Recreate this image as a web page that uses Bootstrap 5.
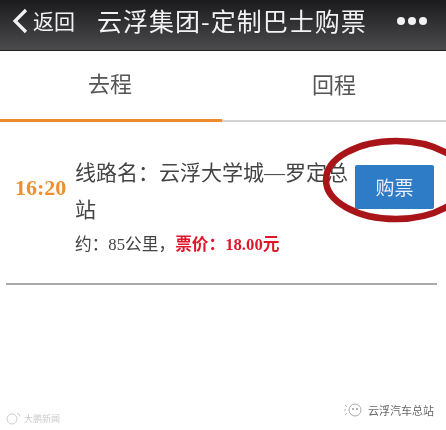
<!DOCTYPE html>
<html lang="zh">
<head>
<meta charset="utf-8">
<title>云浮集团-定制巴士购票</title>
<link rel="stylesheet" href="https://cdn.jsdelivr.net/npm/bootstrap@5.3.0/dist/css/bootstrap.min.css">
<style>
html,body{height:430px;overflow:hidden;background:#fff}
body{font-family:"Liberation Serif","Noto Sans CJK SC",serif;color:#444;position:relative}
.page{filter:blur(.45px);height:430px}
.hdr{height:51px;background:linear-gradient(#1b1b1d,#4b4b4d);color:#f2f2f2;font-family:"Noto Sans CJK SC",sans-serif;border-bottom:1px solid #222;padding:0 0 9px 12px}
.hdr-back{font-size:21px;line-height:1;gap:5px;width:85px;flex:none}
.hdr-title{font-size:25px;line-height:1;width:290px;flex:none;letter-spacing:1px;white-space:nowrap}
.hdr-dots{gap:3px;margin-left:10px}
.hdr-dots i{width:8px;height:8px;border-radius:50%;background:#f2f2f2;display:block}
.tabs{height:71px;font-family:"Noto Sans CJK SC",sans-serif;font-size:22px;color:#555}
.tab-a,.tab-b{height:100%;padding-bottom:5px;border-bottom:2px solid #d4d4d4}
.tab-a{width:222px;border-bottom:3px solid #ee8a2e;padding-right:2px}
.tab-b{width:224px}
.trip{padding:33px 3px 0 9px;height:163px;margin:0 9px 0 6px;border-bottom:2px solid #a9a9a9}
.trip-time{font-size:22px;font-weight:700;color:#ee8f30;width:60px;flex:none;margin-top:22px;line-height:1}
.trip-name{font-size:21px;line-height:36.5px;width:277px;color:#444;flex:none}
.trip-meta{font-size:16.7px;line-height:20px;margin-top:7px;color:#444}
.trip-price{color:#e0162b;font-weight:700}
.buy{background:#2e7cc6;border:0;border-radius:2px;width:79px;height:44px;color:#eef;font-size:19px;font-family:"Noto Sans CJK SC",sans-serif;padding:0;flex:none;margin:10px 0 0 3px}
.ring{position:absolute;left:322px;top:137px;pointer-events:none}
.mark-l,.mark-r{position:absolute;font-family:"Noto Sans CJK SC",sans-serif;line-height:1}
.mark-l{left:6px;top:412px;font-size:9px;color:#ccc;gap:2px}
.mark-r{left:343px;top:402px;font-size:11px;color:#666;gap:5px}
</style>
</head>
<body>
<div class="page">
<header class="hdr d-flex align-items-center">
  <div class="hdr-back d-flex align-items-center">
    <svg width="16" height="26" viewBox="0 0 16 26"><path d="M14 2 3 13l11 11" fill="none" stroke="#f2f2f2" stroke-width="3.2"/></svg>
    <span>返回</span>
  </div>
  <div class="hdr-title">云浮集团-定制巴士购票</div>
  <div class="hdr-dots d-flex"><i></i><i></i><i></i></div>
</header>
<nav class="tabs d-flex">
  <div class="tab-a d-flex align-items-center justify-content-center">去程</div>
  <div class="tab-b d-flex align-items-center justify-content-center">回程</div>
</nav>
<section class="trip d-flex align-items-start">
  <div class="trip-time">16:20</div>
  <div>
    <div class="trip-name">线路名：云浮大学城—罗定总站</div>
    <div class="trip-meta">约：85公里，<span class="trip-price">票价：18.00元</span></div>
  </div>
  <button class="buy" type="button">购票</button>
</section>
<svg class="ring" width="124" height="90" viewBox="0 0 124 90"><ellipse cx="74" cy="43" rx="70" ry="39" fill="none" stroke="#a81418" stroke-width="6.5"/></svg>
<div class="mark-l d-flex align-items-center">
  <svg width="16" height="13" viewBox="0 0 16 13"><circle cx="6" cy="7" r="5" fill="none" stroke="#ccc"/><path d="M11 1.5a3 3 0 0 1 3 3" fill="none" stroke="#ccc"/></svg><span>大鹏新闻</span>
</div>
<div class="mark-r d-flex align-items-center">
  <svg width="20" height="16" viewBox="0 0 20 16"><path d="M2 3l2 2M1 8h2M2 13l2-2" stroke="#bbb" fill="none"/><circle cx="12" cy="8" r="6" fill="none" stroke="#aaa"/><circle cx="10" cy="7" r="1" fill="#999"/><circle cx="14" cy="7" r="1" fill="#999"/></svg><span>云浮汽车总站</span>
</div>
</div>
</body>
</html>
